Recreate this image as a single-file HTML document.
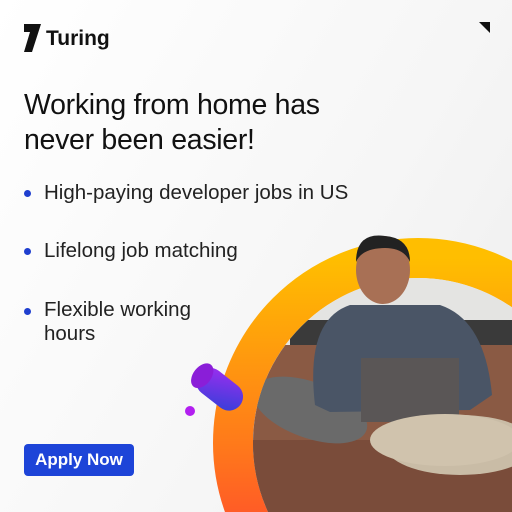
<!DOCTYPE html>
<html style="overflow:hidden"><head><style>
html,body{margin:0;width:512px;height:512px;overflow:hidden}
body{background:linear-gradient(120deg,#fff 0%,#f6f6f6 60%,#eee 100%);font-family:"Liberation Sans",sans-serif;position:relative}
.t{position:absolute;left:24px;color:#111}
h1{position:absolute;left:24px;top:88px;margin:0;font-size:28.5px;line-height:35px;font-weight:normal;color:#111;letter-spacing:-0.3px}
.b{position:absolute;left:44px;font-size:20.5px;line-height:24px;color:#222;white-space:nowrap}
.d{position:absolute;left:24px;width:7px;height:7px;border-radius:50%;background:#1f3fcf}
.btn{position:absolute;left:24px;top:444px;width:110px;height:32px;background:#1d44d8;border-radius:4px;color:#fff;font-size:17px;font-weight:bold;text-align:center;line-height:32px}
</style></head><body>
<svg width="512" height="512" style="position:absolute;left:0;top:0">
<defs>
<linearGradient id="r" x1="0" y1="0" x2="0" y2="1"><stop offset="0" stop-color="#ffbe00"/><stop offset="0.5" stop-color="#ff7a1a"/><stop offset="1" stop-color="#ff2a3a"/></linearGradient>
<clipPath id="c"><circle cx="418" cy="443" r="165"/></clipPath>
<linearGradient id="cy" x1="0" y1="0" x2="1" y2="1"><stop offset="0" stop-color="#a22cf0"/><stop offset="1" stop-color="#3040d8"/></linearGradient>
</defs>
<polygon points="24,24 41,24 32,52 24,52 30,32 24,32" fill="#111"/>
<polygon points="479,22 490,22 490,33" fill="#111"/>
<circle cx="418" cy="443" r="185" fill="none" stroke="url(#r)" stroke-width="40"/>
<g clip-path="url(#c)">
<rect x="250" y="270" width="270" height="250" fill="#e4e4e2"/>
<rect x="290" y="320" width="230" height="30" fill="#3a3a3a"/>
<rect x="250" y="345" width="270" height="170" fill="#8a5a44"/>
<rect x="250" y="440" width="270" height="80" fill="#7a4c3a"/>
<ellipse cx="310" cy="410" rx="60" ry="28" fill="#6a6a6a" transform="rotate(20 310 410)"/>
<ellipse cx="460" cy="445" rx="75" ry="30" fill="#c9bca6"/>
</g>
<path d="M315,405 Q305,320 350,305 L440,305 Q485,320 492,395 L470,410 L330,412Z" fill="#4a5566"/>
<ellipse cx="383" cy="270" rx="27" ry="34" fill="#a87055"/>
<path d="M356,262 Q356,232 385,236 Q410,238 410,262 Q404,248 385,248 Q362,248 356,262Z" fill="#222"/>
<rect x="361" y="358" width="98" height="64" fill="#5a5656"/>
<ellipse cx="445" cy="440" rx="75" ry="26" fill="#d0c3ad"/>
<g transform="rotate(38 218 388)"><rect x="194" y="374" width="52" height="28" rx="14" fill="url(#cy)"/><ellipse cx="198" cy="388" rx="9" ry="14" fill="#8a1ed8"/></g>
<circle cx="190" cy="411" r="5" fill="#b21ff0"/>
</svg>
<div class="t" style="left:46px;top:27px;font-size:21px;font-weight:bold">Turing</div>
<h1>Working from home has<br>never been easier!</h1>
<div class="d" style="top:190px"></div><div class="b" style="top:181px">High-paying developer jobs in US</div>
<div class="d" style="top:248px"></div><div class="b" style="top:239px">Lifelong job matching</div>
<div class="d" style="top:308px"></div><div class="b" style="top:298px">Flexible working<br>hours</div>
<div class="btn">Apply Now</div>
</body></html>
